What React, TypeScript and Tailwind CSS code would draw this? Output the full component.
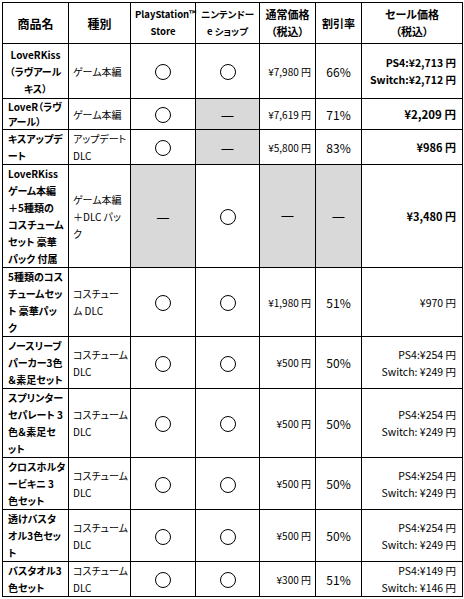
import type { ReactNode } from 'react';

type Row = {
  h: number;
  name: string[];
  center?: boolean;
  tight?: boolean;
  kind: string[];
  ps: boolean;
  sw: boolean;
  price?: string;
  rate?: string;
  sale: string[];
  saleClass: string;
};

const cell = 'border border-black px-[4px] py-0 align-middle';
const gray = 'bg-[#d9d9d9]';

const dual = (a: string, b: string) => [a, b];

// heights are line-to-line minus the 1px border
const rows: Row[] = [
  { h: 55, name: ['LoveRKiss', '（ラヴアール', 'キス）'], center: true, kind: ['ゲーム本編'], ps: true, sw: true, price: '¥7,980 円', rate: '66%', sale: dual('PS4:¥2,713 円', 'Switch:¥2,712 円'), saleClass: 'font-bold text-[10.5px]' },
  { h: 31, name: ['LoveR（ラヴ', 'アール）'], tight: true, kind: ['ゲーム本編'], ps: true, sw: false, price: '¥7,619 円', rate: '71%', sale: ['¥2,209 円'], saleClass: 'font-bold text-[11.5px]' },
  { h: 33, name: ['キスアップデ', 'ート'], kind: ['アップデート', 'DLC'], ps: true, sw: false, price: '¥5,800 円', rate: '83%', sale: ['¥986 円'], saleClass: 'font-bold text-[11px]' },
  { h: 101, name: ['LoveRKiss', 'ゲーム本編', '＋5種類の', 'コスチューム', 'セット 豪華', 'パック 付属'], kind: ['ゲーム本編', '＋DLC パッ', 'ク'], ps: false, sw: true, sale: ['¥3,480 円'], saleClass: 'font-bold text-[11px]' },
  { h: 69, name: ['5種類のコス', 'チュームセッ', 'ト 豪華パッ', 'ク'], kind: ['コスチュー', 'ム DLC'], ps: true, sw: true, price: '¥1,980 円', rate: '51%', sale: ['¥970 円'], saleClass: 'text-[10.5px]' },
  { h: 50, name: ['ノースリーブ', 'パーカー3色', '＆素足セット'], kind: ['コスチューム', 'DLC'], ps: true, sw: true, price: '¥500 円', rate: '50%', sale: dual('PS4:¥254 円', 'Switch: ¥249 円'), saleClass: 'text-[10.5px]' },
  { h: 67, name: ['スプリンター', 'セパレート 3', '色＆素足セ', 'ット'], kind: ['コスチューム', 'DLC'], ps: true, sw: true, price: '¥500 円', rate: '50%', sale: dual('PS4:¥254 円', 'Switch: ¥249 円'), saleClass: 'text-[10.5px]' },
  { h: 51, name: ['クロスホルタ', 'ービキニ 3', '色セット'], kind: ['コスチューム', 'DLC'], ps: true, sw: true, price: '¥500 円', rate: '50%', sale: dual('PS4:¥254 円', 'Switch: ¥249 円'), saleClass: 'text-[10.5px]' },
  { h: 51, name: ['透けバスタ', 'オル3色セッ', 'ト'], kind: ['コスチューム', 'DLC'], ps: true, sw: true, price: '¥500 円', rate: '50%', sale: dual('PS4:¥254 円', 'Switch: ¥249 円'), saleClass: 'text-[10.5px]' },
  { h: 34, name: ['バスタオル3', '色セット'], kind: ['コスチューム', 'DLC'], ps: true, sw: true, price: '¥300 円', rate: '51%', sale: dual('PS4:¥149 円', 'Switch: ¥146 円'), saleClass: 'text-[10.5px]' },
];

function Lines({ items }: { items: string[] }) {
  return (
    <>
      {items.map((t, i) => (
        <div key={i} className="whitespace-nowrap">
          {t}
        </div>
      ))}
    </>
  );
}

const Circle = () => <span className="inline-block w-[16px] h-[16px] rounded-full border-[1.5px] border-black align-middle" />;
const Dash = () => <span className="text-[15px] leading-none">—</span>;

function Mark({ on }: { on: boolean }): ReactNode {
  return on ? <Circle /> : <Dash />;
}

export default function App() {
  return (
    <div className="bg-white w-[464px] h-[599px] pt-[2px] pl-[2px] font-['Noto_Sans_CJK_JP',sans-serif] [font-feature-settings:'palt'] text-black leading-[17px]">
      <table className="table-fixed border-collapse w-[461px]">
        <colgroup>
          <col className="w-[66px]" />
          <col className="w-[62px]" />
          <col className="w-[65px]" />
          <col className="w-[64px]" />
          <col className="w-[56px]" />
          <col className="w-[46px]" />
          <col className="w-[101px]" />
        </colgroup>
        <thead>
          <tr className="h-[41px] font-bold text-center">
            <th className={`${cell} text-[12px]`}>商品名</th>
            <th className={`${cell} text-[12px]`}>種別</th>
            <th className={`${cell} text-[9.5px] px-0`}>
              <div>PlayStation™</div>
              <div>Store</div>
            </th>
            <th className={`${cell} text-[9.5px] px-0`}>
              <div>ニンテンドー</div>
              <div>e ショップ</div>
            </th>
            <th className={`${cell} text-[11px] px-0`}>
              <div>通常価格</div>
              <div>（税込）</div>
            </th>
            <th className={`${cell} text-[11px] px-0`}>割引率</th>
            <th className={`${cell} text-[11px]`}>
              <div>セール価格</div>
              <div>（税込）</div>
            </th>
          </tr>
        </thead>
        <tbody>
          {rows.map((r, i) => (
            <tr key={i} style={{ height: r.h }}>
              <td className={`${cell} px-[5px] font-bold text-[10px] ${r.center ? 'text-center' : 'text-left'} ${r.tight ? 'leading-[15px]' : ''}`}>
                <Lines items={r.name} />
              </td>
              <td className={`${cell} text-[10px] text-left`}>
                <Lines items={r.kind} />
              </td>
              <td className={`${cell} text-center ${r.ps ? '' : gray}`}>
                <Mark on={r.ps} />
              </td>
              <td className={`${cell} text-center ${r.sw ? '' : gray}`}>
                <Mark on={r.sw} />
              </td>
              <td className={`${cell} text-[10px] whitespace-nowrap ${r.price ? 'text-right' : `text-center ${gray}`}`}>
                {r.price ?? <Dash />}
              </td>
              <td className={`${cell} text-[12px] text-center ${r.rate ? '' : gray}`}>{r.rate ?? <Dash />}</td>
              <td className={`${cell} px-[6px] text-right ${r.saleClass}`}>
                <Lines items={r.sale} />
              </td>
            </tr>
          ))}
        </tbody>
      </table>
    </div>
  );
}
